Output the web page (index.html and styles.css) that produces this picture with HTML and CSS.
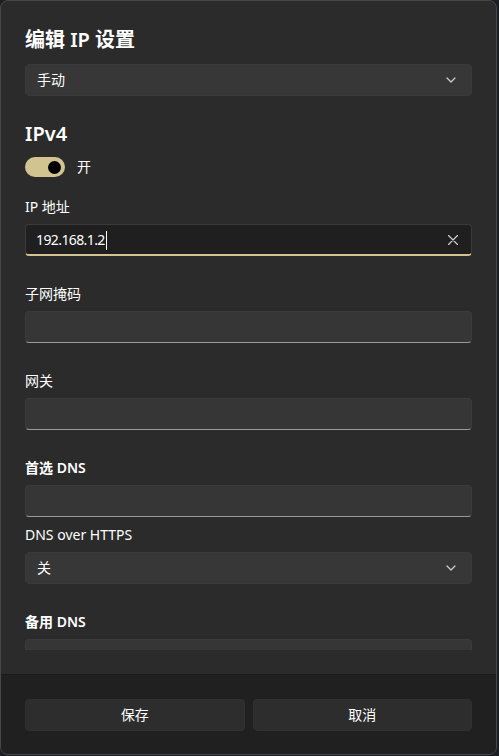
FILE: index.html
```html
<!DOCTYPE html>
<html lang="zh-CN">
<head>
<meta charset="utf-8">
<title>编辑 IP 设置</title>
<link rel="stylesheet" href="styles.css">
</head>
<body>
<div class="dialog">
  <div class="content">
    <div class="scroll">
      <h1 class="title">编辑 IP 设置</h1>
      <div class="combo">
        <span>手动</span>
        <svg class="chev" width="10" height="6" viewBox="0 0 10 6"><path d="M1 1 L5 5 L9 1" fill="none" stroke="#cfcfcf" stroke-width="1.2" stroke-linecap="round" stroke-linejoin="round"/></svg>
      </div>
      <h2 class="section">IPv4</h2>
      <div class="toggle-row">
        <span class="toggle"><span class="thumb"></span></span>
        <span>开</span>
      </div>
      <div class="label first">IP 地址</div>
      <div class="input focused">
        <span class="value">192.168.1.2<span class="caret"></span></span>
        <svg class="clear" width="10" height="10" viewBox="0 0 10 10"><path d="M0.5 0.5 L9.5 9.5 M9.5 0.5 L0.5 9.5" stroke="#d0d0d0" stroke-width="1.2" stroke-linecap="round"/></svg>
      </div>
      <div class="label">子网掩码</div>
      <div class="input"></div>
      <div class="label">网关</div>
      <div class="input"></div>
      <div class="label strong">首选 DNS</div>
      <div class="input"></div>
      <div class="label tight">DNS over HTTPS</div>
      <div class="combo small-gap">
        <span>关</span>
        <svg class="chev" width="10" height="6" viewBox="0 0 10 6"><path d="M1 1 L5 5 L9 1" fill="none" stroke="#cfcfcf" stroke-width="1.2" stroke-linecap="round" stroke-linejoin="round"/></svg>
      </div>
      <div class="label strong">备用 DNS</div>
      <div class="input"></div>
    </div>
  </div>
  <div class="footer">
    <button class="btn">保存</button>
    <button class="btn">取消</button>
  </div>
</div>
</body>
</html>
```
FILE: styles.css
```css
html, body {
  margin: 0;
  padding: 0;
}
body {
  background: #1b1f24;
  width: 499px;
  height: 756px;
  overflow: hidden;
  font-family: "Noto Sans", "Noto Sans CJK SC", sans-serif;
  color: #ffffff;
  font-size: 14px;
}
.dialog {
  width: 497px;
  height: 755px;
  box-sizing: border-box;
  border: 1px solid #474747;
  border-radius: 8px;
  background: #2b2b2b;
  display: flex;
  flex-direction: column;
  overflow: hidden;
}
.content {
  flex: 1;
  min-height: 0;
  padding: 25px 24px 24px 24px;
  display: flex;
  flex-direction: column;
}
.scroll {
  flex: 1;
  min-height: 0;
  overflow: hidden;
  display: flex;
  flex-direction: column;
}
.title {
  margin: 0;
  font-size: 20px;
  font-weight: 600;
  line-height: 28px;
}
.combo {
  margin-top: 10px;
  height: 32px;
  flex: none;
  box-sizing: border-box;
  background: #373737;
  border: 1px solid #3a3a3a;
  border-radius: 4px;
  padding: 0 15px 0 11px;
  display: flex;
  align-items: center;
  justify-content: space-between;
  line-height: 20px;
}
.combo.small-gap {
  margin-top: 7px;
}
.chev {
  display: block;
}
.section {
  margin: 24px 0 0 0;
  font-size: 20px;
  font-weight: 600;
  line-height: 28px;
}
.toggle-row {
  margin-top: 9px;
  height: 20px;
  flex: none;
  display: flex;
  align-items: center;
  gap: 12px;
  line-height: 20px;
}
.toggle {
  width: 40px;
  height: 20px;
  border-radius: 10px;
  background: #d2c490;
  display: flex;
  align-items: center;
  justify-content: flex-end;
  padding-right: 4px;
  box-sizing: border-box;
}
.thumb {
  width: 13px;
  height: 13px;
  border-radius: 50%;
  background: #000000;
}
.label {
  margin-top: 28px;
  line-height: 20px;
  font-size: 14px;
  flex: none;
}
.label.first {
  margin-top: 20px;
}
.label.tight {
  margin-top: 8px;
}
.label.strong {
  font-weight: 600;
}
.input {
  margin-top: 7px;
  height: 32px;
  flex: none;
  box-sizing: border-box;
  background: #363636;
  border: 1px solid #3b3b3b;
  border-bottom-color: #9a9a9a;
  border-radius: 4px;
  display: flex;
  align-items: center;
  justify-content: space-between;
  padding: 0 13px 0 10px;
  line-height: 20px;
}
.input.focused {
  background: #1f1f1f;
  border-color: #3a3a3a;
  border-bottom: 2px solid #d2c490;
  padding-top: 1px;
}
.value {
  display: flex;
  align-items: center;
  letter-spacing: -0.6px;
}
.caret {
  display: inline-block;
  width: 1px;
  height: 19px;
  background: #ffffff;
  margin-left: 1px;
}
.clear {
  display: block;
}
.footer {
  flex: none;
  height: 80px;
  box-sizing: border-box;
  background: #202020;
  border-top: 1px solid #1b1b1b;
  padding: 24px 24px 0 24px;
  display: grid;
  grid-template-columns: 1fr 1fr;
  gap: 8px;
  align-items: start;
}
.btn {
  height: 32px;
  border: 1px solid #303030;
  border-radius: 4px;
  background: #2d2d2d;
  color: #ffffff;
  font-family: "Noto Sans", "Noto Sans CJK SC", sans-serif;
  font-size: 14px;
  line-height: 20px;
  padding: 0;
}
```
